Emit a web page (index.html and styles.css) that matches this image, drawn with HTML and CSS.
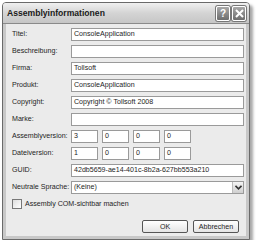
FILE: index.html
```html
<!DOCTYPE html>
<html>
<head>
<meta charset="utf-8">
<link rel="stylesheet" href="styles.css">
</head>
<body>
<div class="window">
  <div class="titlebar">
    <span class="title">Assemblyinformationen</span>
    <div class="tbtns">
      <span class="tbtn">?</span>
      <span class="tbtn close"><svg width="9" height="9" viewBox="0 0 9 9"><path d="M1 1L8 8M8 1L1 8" stroke="#fff" stroke-width="2"/></svg></span>
    </div>
  </div>
  <div class="body">
    <div class="form">
      <label>Titel:</label><div class="field">ConsoleApplication</div>
      <label>Beschreibung:</label><div class="field"></div>
      <label>Firma:</label><div class="field">Tollsoft</div>
      <label>Produkt:</label><div class="field">ConsoleApplication</div>
      <label>Copyright:</label><div class="field">Copyright © Tollsoft 2008</div>
      <label>Marke:</label><div class="field"></div>
      <label>Assemblyversion:</label>
      <div class="ver"><div class="field">3</div><div class="field">0</div><div class="field">0</div><div class="field">0</div></div>
      <label>Dateiversion:</label>
      <div class="ver"><div class="field">1</div><div class="field">0</div><div class="field">0</div><div class="field">0</div></div>
      <label>GUID:</label><div class="field">42db5659-ae14-401c-8b2a-627bb553a210</div>
      <label>Neutrale Sprache:</label>
      <div class="field select"><span>(Keine)</span><span class="arrow"><svg width="7" height="5" viewBox="0 0 7 5"><path d="M0.5 0.8L3.5 3.8L6.5 0.8" fill="none" stroke="#333" stroke-width="1.6"/></svg></span></div>
    </div>
    <div class="check"><span class="box"></span><span>Assembly COM-sichtbar machen</span></div>
    <div class="buttons"><span class="btn">OK</span><span class="btn">Abbrechen</span></div>
  </div>
</div>
</body>
</html>
```
FILE: styles.css
```css
html, body { margin: 0; padding: 0; background: #fff; }
body {
  font-family: "Liberation Sans", "DejaVu Sans", sans-serif;
  font-size: 7.1px;
  color: #1e1e1e;
  padding: 2px 0 0 2px;
}
.window {
  width: 246px;
  height: 236px;
  border: 1px solid #6a6a6a;
  border-radius: 4px 4px 0 0;
  background: #ebebeb;
  box-shadow: 3px 3px 3px rgba(0,0,0,0.35);
  display: flex;
  flex-direction: column;
  overflow: hidden;
}
.titlebar {
  height: 20px;
  background: linear-gradient(#f0f0f0, #d4d4d4 50%, #c6c6c6);
  border-bottom: 1px solid #8a8a8a;
  display: flex;
  align-items: center;
  justify-content: space-between;
  padding: 0 3px 0 4px;
}
.title { font-weight: bold; font-size: 8.6px; color: #1a1a1a; }
.tbtns { display: flex; gap: 2px; }
.tbtn {
  width: 12px; height: 13px;
  border: 1px solid #fff;
  border-radius: 2px;
  background: linear-gradient(#a8a8a8, #6e6e6e);
  color: #fff;
  font-weight: bold;
  font-size: 10px;
  display: flex; align-items: center; justify-content: center;
  box-shadow: 0 0 0 1px #777;
}
.body {
  flex: 1;
  border: 3px solid #c8c8c8;
  border-top: none;
  padding: 4px 3px 0 6px;
  display: flex;
  flex-direction: column;
}
.form {
  display: grid;
  grid-template-columns: 59px 173px;
  row-gap: 4px;
  align-items: center;
}
label { line-height: 13px; white-space: nowrap; }
.field {
  height: 11px;
  border: 1px solid #9a9a9a;
  background: #fff;
  line-height: 11px;
  padding: 0 2px;
  white-space: nowrap;
  overflow: hidden;
}
.ver { display: flex; gap: 4px; }
.ver .field { width: 21px; }
.select { display: flex; justify-content: space-between; padding-right: 0; }
.arrow {
  width: 10px; height: 11px;
  background: linear-gradient(#f4f4f4, #cfcfcf);
  border-left: 1px solid #bbb;
  display: flex; align-items: center; justify-content: center;
}
.check { display: flex; align-items: center; gap: 3px; margin-top: 5px; }
.box { width: 8px; height: 8px; border: 1px solid #777; background: linear-gradient(135deg, #ddd, #fff); }
.buttons { display: flex; justify-content: flex-end; gap: 5px; margin-top: 11px; padding-right: 4px; }
.btn {
  width: 44px; height: 11px;
  border: 1px solid #555;
  border-radius: 2px;
  background: linear-gradient(#fff, #e4e4e4);
  display: flex; align-items: center; justify-content: center;
}
```
